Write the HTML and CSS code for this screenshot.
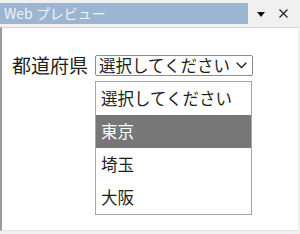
FILE: index.html
```html
<!DOCTYPE html>
<html lang="ja">
<head>
<meta charset="utf-8">
<link rel="stylesheet" href="styles.css">
</head>
<body>
<div class="window">
  <div class="titlebar">
    <div class="title">Web プレビュー</div>
    <div class="tools">
      <svg class="tri" width="8" height="5" viewBox="0 0 8 5"><polygon points="0,0 8,0 4,5" fill="#111"/></svg>
      <svg class="close" width="9" height="9" viewBox="0 0 9 9"><path d="M0.5 0.5 L8.5 8.5 M8.5 0.5 L0.5 8.5" stroke="#222" stroke-width="1.2"/></svg>
    </div>
  </div>
  <div class="pane">
    <div class="field">
      <span class="label">都道府県</span>
      <div class="picker">
        <div class="select">
          <span class="value">選択してください</span>
          <svg class="chev" width="11" height="7" viewBox="0 0 11 7"><polyline points="0.7,0.7 5.5,5.5 10.3,0.7" fill="none" stroke="#222" stroke-width="1.4"/></svg>
        </div>
        <ul class="list">
          <li class="opt">選択してください</li>
          <li class="opt sel">東京</li>
          <li class="opt">埼玉</li>
          <li class="opt">大阪</li>
        </ul>
      </div>
    </div>
  </div>
</div>
</body>
</html>
```
FILE: styles.css
```css
html, body {
  margin: 0;
  padding: 0;
}
body {
  width: 300px;
  height: 234px;
  background: #f0f0f0;
  font-family: "Noto Sans CJK JP", "Noto Sans", sans-serif;
  overflow: hidden;
}
.window {
  display: flex;
  flex-direction: column;
  height: 234px;
}
.titlebar {
  display: flex;
  align-items: center;
  height: 24px;
  padding-top: 3px;
  box-sizing: border-box;
}
.title {
  width: 244px;
  height: 21px;
  padding-left: 4px;
  background: #9cb5d1;
  color: #eef2f8;
  font-size: 14px;
  line-height: 21px;
  white-space: nowrap;
}
.tools {
  display: flex;
  align-items: center;
  padding-left: 9px;
  gap: 14px;
}
.tri {
  display: block;
  margin-top: 2px;
}
.close {
  display: block;
}
.pane {
  margin-top: 3px;
  height: 204px;
  margin-right: 2px;
  background: #ffffff;
  border-left: 2px solid #9b9b9b;
  border-top: 1px solid #d4d4d4;
  border-bottom: 1px solid #e4e4e4;
  padding: 27px 0 0 10px;
  box-sizing: border-box;
}
.field {
  display: flex;
  align-items: flex-start;
  gap: 7px;
}
.label {
  font-size: 19px;
  line-height: 20px;
  color: #1e1e1e;
  width: 76px;
  white-space: nowrap;
}
.picker {
  display: flex;
  flex-direction: column;
  gap: 5px;
}
.select {
  width: 158px;
  height: 21px;
  box-sizing: border-box;
  border: 1px solid #8c8c8c;
  border-radius: 2px;
  display: flex;
  align-items: center;
  justify-content: space-between;
  padding: 0 5px 0 3px;
}
.value {
  font-size: 16.5px;
  line-height: 19px;
  color: #1e1e1e;
  white-space: nowrap;
}
.chev {
  display: block;
}
.list {
  list-style: none;
  margin: 0;
  padding: 0;
  width: 157px;
  box-sizing: border-box;
  border: 1px solid #a6a6a6;
}
.opt {
  height: 33px;
  line-height: 33px;
  padding-left: 5px;
  font-size: 16.5px;
  color: #1e1e1e;
  white-space: nowrap;
}
.opt.sel {
  background: #777777;
  color: #ffffff;
}
```
